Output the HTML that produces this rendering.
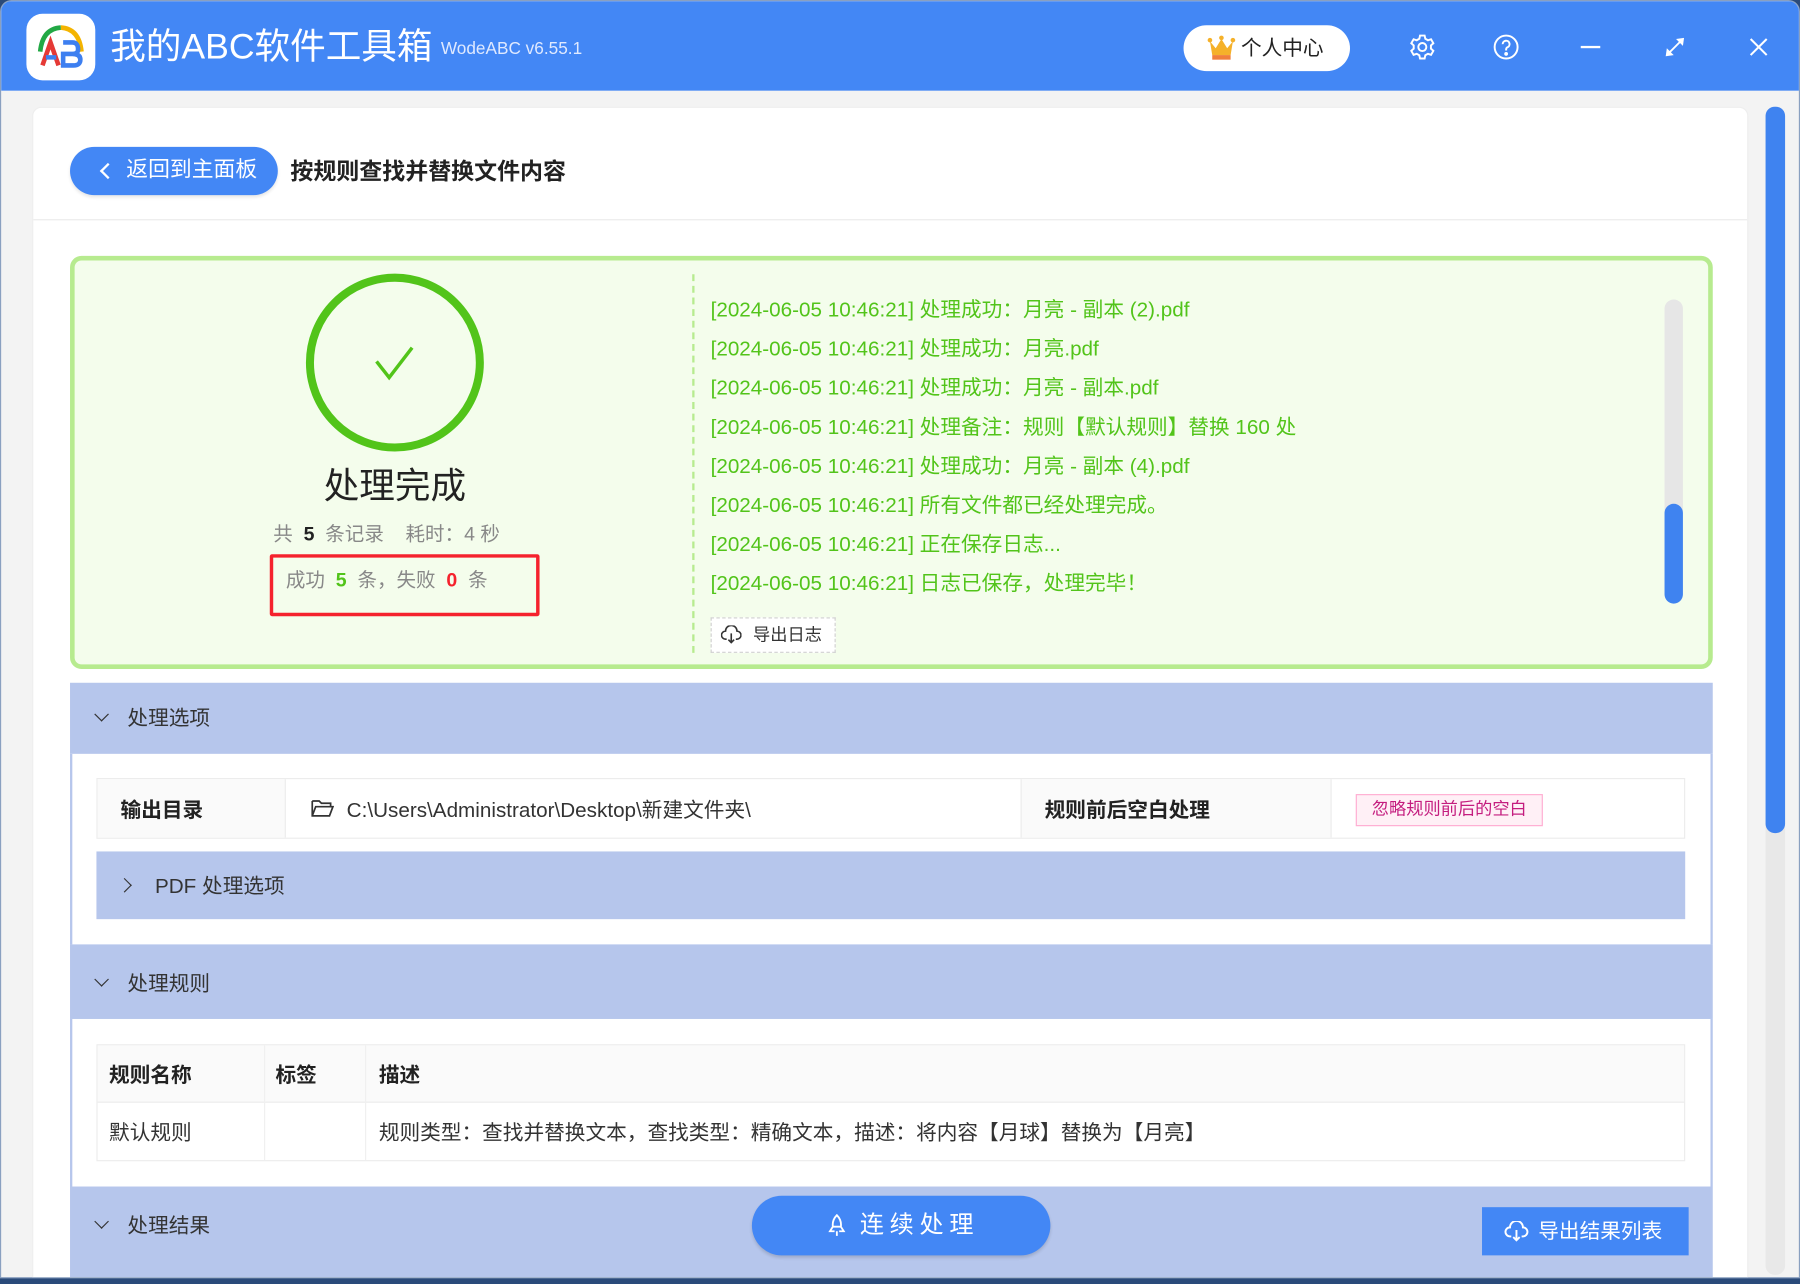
<!DOCTYPE html>
<html><head><meta charset="utf-8">
<style>
*{box-sizing:border-box;margin:0;padding:0}
html,body{width:1800px;height:1284px;overflow:hidden;background:#2a4a7a}
#s{position:absolute;left:0;top:0;width:1568px;height:1119px;transform:scale(1.14796,1.1475);transform-origin:0 0;font-family:"Liberation Sans","Noto Sans CJK SC",sans-serif;color:#333}
.a{position:absolute}
.win{left:0;top:0;width:1568px;height:1114px;background:#f3f3f3;border-radius:10px 10px 0 0;overflow:hidden;border:1px solid #8aa0c0}
.tb{left:0;top:0;width:1568px;height:78px;background:#4387f5}
.g{color:#52c41a}
.log div{height:34px;line-height:34px;font-size:18px;color:#52c41a;white-space:nowrap}
.hd{background:#b6c6ec;font-size:18px;color:#333}
.chev{display:inline-block;width:9px;height:9px;border-right:1.6px solid #333;border-bottom:1.6px solid #333;transform:rotate(45deg)}
</style></head><body><div id="s">
<div class="a win">
 <div class="a tb"></div>
 <div class="a" style="left:22px;top:11px;width:60px;height:58px;background:#fff;border-radius:14px"></div>
 <svg class="a" style="left:26px;top:14px" width="52" height="52" viewBox="0 0 52 52">
  <path d="M8 30 Q10 10 26 9" stroke="#22a845" stroke-width="4" fill="none"/>
  <path d="M26 9 Q42 10 44 30" stroke="#f4b400" stroke-width="4" fill="none"/>
  <path d="M10 42 L17 22 L24 42" stroke="#e53935" stroke-width="4" fill="none"/>
  <path d="M13 35 H22" stroke="#3d7ff0" stroke-width="4"/>
  <path d="M28 22 H36 Q41 22 41 28 Q41 32 36 32 H28 V42 H37 Q43 42 43 37 Q43 32 36 32" stroke="#3d7ff0" stroke-width="4" fill="none"/>
 </svg>
 <div class="a" style="left:95px;top:20px;font-size:31px;color:#fff;line-height:40px">我的ABC软件工具箱</div>
 <div class="a" style="left:383px;top:33px;font-size:15px;color:#dfe9ff">WodeABC v6.55.1</div>
 <div class="a" style="left:1030px;top:21px;width:145px;height:40px;background:#fff;border-radius:20px;font-size:18px;line-height:40px;padding-left:50px;color:#222">个人中心</div>
 <svg class="a" style="left:1050px;top:29px" width="26" height="24" viewBox="0 0 26 24"><path d="M3 6 L8 12 L13 4 L18 12 L23 6 L21 18 H5Z" fill="#f5b12a"/><rect x="5" y="18" width="16" height="4" fill="#f07f3c"/><circle cx="3" cy="5" r="2" fill="#f5b12a"/><circle cx="13" cy="3" r="2" fill="#f5b12a"/><circle cx="23" cy="5" r="2" fill="#f5b12a"/></svg>
 <svg class="a" style="left:1226px;top:28px" width="24" height="24" viewBox="0 0 24 24" fill="none" stroke="#fff" stroke-width="1.7"><circle cx="12" cy="12" r="3.5"/><path d="M10 2h4l.6 2.8 2.3 1.3 2.7-.9 2 3.5-2.1 1.9v2.8l2.1 1.9-2 3.5-2.7-.9-2.3 1.3L14 22h-4l-.6-2.8-2.3-1.3-2.7.9-2-3.5 2.1-1.9v-2.8L2.4 8.7l2-3.5 2.7.9 2.3-1.3z"/></svg>
 <svg class="a" style="left:1299px;top:28px" width="24" height="24" viewBox="0 0 24 24" fill="none" stroke="#fff" stroke-width="1.7"><circle cx="12" cy="12" r="10"/><path d="M9 9.5a3 3 0 1 1 4 2.8c-.8.4-1 1-1 2v.7"/><circle cx="12" cy="18" r=".8" fill="#fff"/></svg>
 <div class="a" style="left:1376px;top:39px;width:17px;height:2px;background:#fff"></div>
 <svg class="a" style="left:1449px;top:31px" width="18" height="18" viewBox="0 0 18 18" fill="#fff" stroke="#fff" stroke-width="1.6"><path d="M2 16 L16 2"/><path d="M17 1 L10 2 L16 8Z M1 17 L2 10 L8 16Z" stroke="none"/></svg>
 <svg class="a" style="left:1522px;top:31px" width="18" height="18" viewBox="0 0 18 18" stroke="#fff" stroke-width="1.8"><path d="M2 2L16 16M16 2L2 16"/></svg>

 <div class="a" style="left:1537px;top:92px;width:17px;height:1018px;background:#e8e8e8;border-radius:8px"></div>
 <div class="a" style="left:1537px;top:92px;width:17px;height:633px;background:#3f83f0;border-radius:8px"></div>

 <div class="a" style="left:27px;top:92px;width:1495px;height:1030px;background:#fff;border-radius:8px;border:1px solid #eee"></div>
 <div class="a" style="left:60px;top:127px;width:181px;height:42px;background:#4387f5;border-radius:21px;color:#fff;font-size:19px;line-height:42px;padding-left:49px;box-shadow:0 2px 3px rgba(0,0,0,.1)">返回到主面板</div>
 <div class="a" style="left:88px;top:143px;width:10px;height:10px;border-left:2px solid #fff;border-bottom:2px solid #fff;transform:rotate(45deg)"></div>
 <div class="a" style="left:252px;top:135px;font-size:20px;font-weight:bold;color:#222;line-height:28px">按规则查找并替换文件内容</div>
 <div class="a" style="left:28px;top:190px;width:1493px;height:1px;background:#ebebeb"></div>

 <div class="a" style="left:60px;top:222px;width:1431px;height:360px;background:#f4fdec;border:4px solid #b7eb8f;border-radius:10px"></div>
 <svg class="a" style="left:264px;top:236px" width="158" height="158" viewBox="0 0 158 158"><circle cx="79" cy="79" r="74" fill="none" stroke="#52c41a" stroke-width="7"/><path d="M63 78 L74 92 L94 66" fill="none" stroke="#52c41a" stroke-width="3"/></svg>
 <div class="a" style="left:243px;top:402px;width:200px;text-align:center;font-size:31px;color:#222;line-height:42px">处理完成</div>
 <div class="a" style="left:237px;top:453px;font-size:17px;color:#888;line-height:24px;white-space:pre">共  <b style="color:#222">5</b>  条记录    耗时：4 秒</div>
 <div class="a" style="left:234px;top:482px;width:235px;height:54px;border:3px solid #f5222d;border-radius:2px"></div>
 <div class="a" style="left:248px;top:493px;font-size:17px;color:#888;line-height:24px;white-space:pre">成功  <b class="g">5</b>  条，失败  <b style="color:#f5222d">0</b>  条</div>
 <div class="a" style="left:602px;top:238px;height:330px;border-left:2px dashed #b7eb8f"></div>
 <div class="a log" style="left:618px;top:252px">
  <div>[2024-06-05 10:46:21] 处理成功：月亮 - 副本 (2).pdf</div>
  <div>[2024-06-05 10:46:21] 处理成功：月亮.pdf</div>
  <div>[2024-06-05 10:46:21] 处理成功：月亮 - 副本.pdf</div>
  <div>[2024-06-05 10:46:21] 处理备注：规则【默认规则】替换 160 处</div>
  <div>[2024-06-05 10:46:21] 处理成功：月亮 - 副本 (4).pdf</div>
  <div>[2024-06-05 10:46:21] 所有文件都已经处理完成。</div>
  <div>[2024-06-05 10:46:21] 正在保存日志...</div>
  <div>[2024-06-05 10:46:21] 日志已保存，处理完毕！</div>
 </div>
 <div class="a" style="left:1449px;top:260px;width:16px;height:265px;background:#e6e6e6;border-radius:8px"></div>
 <div class="a" style="left:1449px;top:438px;width:16px;height:87px;background:#3f83f0;border-radius:8px"></div>
 <div class="a" style="left:618px;top:537px;width:109px;height:31px;background:#fff;border:1px dashed #d0d0d0;font-size:15px;line-height:29px;padding-left:36px;color:#333">导出日志</div>
 <svg class="a" style="left:627px;top:544px" width="18" height="16" viewBox="0 0 18 16" fill="none" stroke="#333" stroke-width="1.4"><path d="M5 12H4a3.5 3.5 0 0 1 0-7 5 5 0 0 1 10 0 3.5 3.5 0 0 1 0 7h-1"/><path d="M9 7v8M6.5 12.5L9 15l2.5-2.5"/></svg>

 <div class="a hd" style="left:60px;top:594px;width:1431px;height:62px"></div>
 <div class="a" style="left:83px;top:613px"><span class="chev"></span></div>
 <div class="a" style="left:110px;top:612px;font-size:18px;line-height:26px">处理选项</div>
 <div class="a" style="left:60px;top:656px;width:1431px;height:166px;background:#fff;border-left:2px solid #b6c6ec;border-right:2px solid #b6c6ec"></div>
 <div class="a" style="left:83px;top:677px;width:1384px;height:53px;border:1px solid #ececec"></div>
 <div class="a" style="left:84px;top:678px;width:164px;height:51px;background:#fafafa;border-right:1px solid #ececec"></div>
 <div class="a" style="left:888px;top:678px;width:271px;height:51px;background:#fafafa;border-left:1px solid #ececec;border-right:1px solid #ececec"></div>
 <div class="a" style="left:104px;top:692px;font-size:18px;font-weight:bold;color:#222;line-height:26px">输出目录</div>
 <svg class="a" style="left:270px;top:695px" width="20" height="17" viewBox="0 0 20 17" fill="none" stroke="#333" stroke-width="1.5"><path d="M1 2h6l2 2h8v3M1 2v13h15l3-8H4L1 15"/></svg>
 <div class="a" style="left:301px;top:692px;font-size:18px;color:#333;line-height:26px">C:\Users\Administrator\Desktop\新建文件夹\</div>
 <div class="a" style="left:909px;top:692px;font-size:18px;font-weight:bold;color:#222;line-height:26px">规则前后空白处理</div>
 <div class="a" style="left:1180px;top:691px;width:163px;height:28px;background:#fff0f6;border:1px solid #ffadd2;color:#c41d7f;font-size:15px;line-height:26px;text-align:center">忽略规则前后的空白</div>
 <div class="a hd" style="left:83px;top:741px;width:1384px;height:59px"></div>
 <div class="a" style="left:103px;top:762px"><span class="chev" style="transform:rotate(-45deg)"></span></div>
 <div class="a" style="left:134px;top:758px;font-size:18px;line-height:26px">PDF 处理选项</div>

 <div class="a hd" style="left:60px;top:822px;width:1431px;height:65px"></div>
 <div class="a" style="left:83px;top:844px"><span class="chev"></span></div>
 <div class="a" style="left:110px;top:843px;font-size:18px;line-height:26px">处理规则</div>
 <div class="a" style="left:60px;top:887px;width:1431px;height:146px;background:#fff;border-left:2px solid #b6c6ec;border-right:2px solid #b6c6ec"></div>
 <div class="a" style="left:83px;top:909px;width:1384px;height:102px;border:1px solid #ececec"></div>
 <div class="a" style="left:84px;top:910px;width:1382px;height:50px;background:#fafafa;border-bottom:1px solid #ececec"></div>
 <div class="a" style="left:229px;top:910px;width:89px;height:100px;border-left:1px solid #f0f0f0;border-right:1px solid #f0f0f0"></div>
 <div class="a" style="left:94px;top:923px;font-size:18px;font-weight:bold;color:#222;line-height:26px">规则名称</div>
 <div class="a" style="left:239px;top:923px;font-size:18px;font-weight:bold;color:#222;line-height:26px">标签</div>
 <div class="a" style="left:329px;top:923px;font-size:18px;font-weight:bold;color:#222;line-height:26px">描述</div>
 <div class="a" style="left:94px;top:973px;font-size:18px;color:#333;line-height:26px">默认规则</div>
 <div class="a" style="left:329px;top:973px;font-size:18px;color:#333;line-height:26px">规则类型：查找并替换文本，查找类型：精确文本，描述：将内容【月球】替换为【月亮】</div>

 <div class="a hd" style="left:60px;top:1033px;width:1431px;height:81px"></div>
 <div class="a" style="left:83px;top:1055px"><span class="chev"></span></div>
 <div class="a" style="left:110px;top:1054px;font-size:18px;line-height:26px">处理结果</div>
 <div class="a" style="left:654px;top:1041px;width:260px;height:52px;background:#4387f5;border-radius:26px;color:#fff;font-size:21px;letter-spacing:5px;line-height:52px;padding-left:94px;box-shadow:0 2px 3px rgba(0,0,0,.15)">连续处理</div>
 <svg class="a" style="left:719px;top:1057px" width="18" height="20" viewBox="0 0 18 20" fill="none" stroke="#fff" stroke-width="1.6"><path d="M9 1c3 3 4 6 3.5 10h-7C5 7 6 4 9 1zM5.5 11L3 15h4M12.5 11L15 15h-4M9 15v4"/></svg>
 <div class="a" style="left:1290px;top:1051px;width:180px;height:42px;background:#4387f5;color:#fff;font-size:18px;line-height:42px;padding-left:49px">导出结果列表</div>
 <svg class="a" style="left:1309px;top:1063px" width="22" height="18" viewBox="0 0 18 16" fill="none" stroke="#fff" stroke-width="1.5"><path d="M5 12H4a3.5 3.5 0 0 1 0-7 5 5 0 0 1 10 0 3.5 3.5 0 0 1 0 7h-1"/><path d="M9 7v8M6.5 12.5L9 15l2.5-2.5"/></svg>
</div>
</div></body></html>
